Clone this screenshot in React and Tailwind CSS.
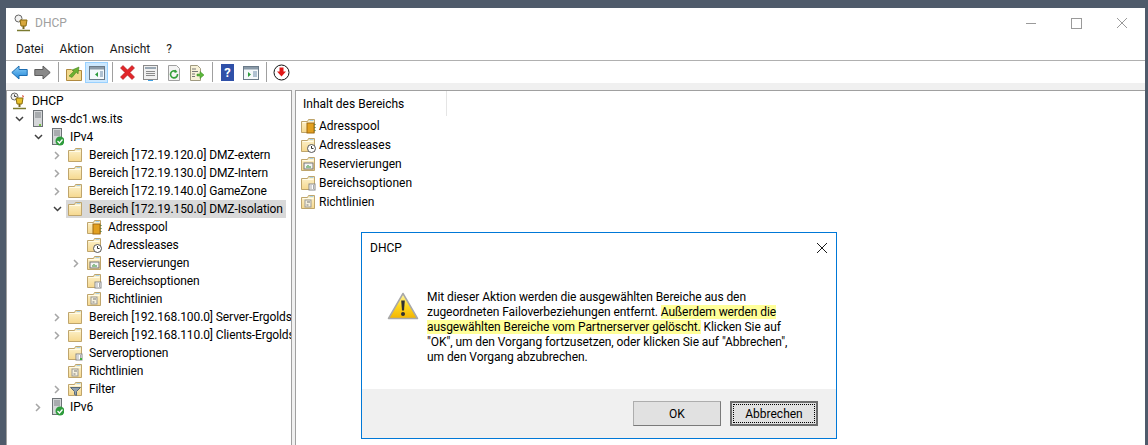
const sans = "font-['Roboto',sans-serif]";

function Folder({ children }) {
  return (
    <svg width="16" height="16" viewBox="0 0 16 16" className="shrink-0">
      <defs>
        <linearGradient id="folderFill" x1="0" y1="0" x2="0" y2="1">
          <stop offset="0" stopColor="#fdf3cf" />
          <stop offset="1" stopColor="#f6d88e" />
        </linearGradient>
      </defs>
      <path d="M1.500 14.500V3.500h6l1-2h6v13z" fill="url(#folderFill)" stroke="#bfa56c" />
      <path d="M9.500 2.500h4" stroke="#a8d0e8" />
      <path d="M2.500 4.500h11" stroke="#fffbe8" />
      {children}
    </svg>
  );
}

function PoolIcon() {
  return (
    <Folder>
      <rect x="7" y="5" width="7" height="10" fill="#e2a020" stroke="#a06a10" />
      <path d="M15 6v1M15 9v1M15 12v1" stroke="#307030" />
    </Folder>
  );
}

function LeaseIcon() {
  return (
    <Folder>
      <circle cx="11.500" cy="11.500" r="4" fill="#fff" stroke="#555" />
      <path d="M11.500 9v2.500h2" stroke="#333" fill="none" />
    </Folder>
  );
}

function ReservIcon() {
  return (
    <Folder>
      <rect x="4" y="7" width="9" height="6" fill="#f4f4f4" stroke="#777" />
      <path d="M6 11h1M8 9v3M10 10v2" stroke="#2e8b2e" />
    </Folder>
  );
}

function OptionIcon({ dot }) {
  return (
    <Folder>
      <rect x="9" y="9" width="6" height="6" fill="#fff" stroke="#888" />
      <path d="M10.500 11h1M13 11h1M10.500 13h1M13 13h1" stroke="#555" />
      {dot && <rect x="13" y="13" width="2" height="2" fill="#40b040" />}
    </Folder>
  );
}

function PolicyIcon() {
  return (
    <Folder>
      <rect x="5" y="6" width="6" height="7" fill="#f6f0dc" stroke="#999" />
      <path d="M7 8h3M6.500 11h2" stroke="#777" />
    </Folder>
  );
}

function FilterIcon() {
  return (
    <Folder>
      <path d="M3.500 6.500h10l-4 4v4l-2-1v-3z" fill="#8fa0b0" stroke="#5a6a78" />
    </Folder>
  );
}

function ServerIcon({ check }) {
  return (
    <svg width="16" height="18" viewBox="-2 0 16 18" className="shrink-0">
      <rect x="2.500" y="0.500" width="9" height="16" fill="#d4d6d8" stroke="#6d7276" />
      <path d="M4 3h6M4 5h6M4 7h6" stroke="#7c8185" />
      {check ? (
        <>
          <circle cx="10" cy="13" r="4.500" fill="#2e9c3c" />
          <path d="M7.500 13l2 2 3-3.500" stroke="#fff" strokeWidth="1.300" fill="none" />
        </>
      ) : (
        <rect x="8" y="14" width="2" height="2" fill="#70c040" />
      )}
    </svg>
  );
}

function DhcpIcon() {
  return (
    <svg width="16" height="18" viewBox="0 0 16 18" className="shrink-0">
      <circle cx="4.500" cy="4.500" r="3.500" fill="#f2f2f2" stroke="#666" />
      <path d="M4.500 2.500v2h2" stroke="#444" fill="none" />
      <path d="M6 6h7l-1 6H7z" fill="#e9c22c" stroke="#8a6d10" />
      <path d="M12 3l2 1-1 2z" fill="#d83a2a" />
      <path d="M9.500 12v3" stroke="#7a6a20" strokeWidth="2" />
      <path d="M3 16.500h13" stroke="#7a7a30" strokeWidth="1.500" />
    </svg>
  );
}

function Chevron({ open }) {
  if (open) {
    return (
      <svg width="9" height="6" viewBox="0 0 9 6">
        <path d="M1 1l3.500 3.500L8 1" fill="none" stroke="#404040" strokeWidth="1.500" />
      </svg>
    );
  }
  return (
    <svg width="6" height="9" viewBox="0 0 6 9">
      <path d="M1 1l3.500 3.500L1 8" fill="none" stroke="#a6a6a6" strokeWidth="1.500" />
    </svg>
  );
}

const rows = [
  { level: 0, icon: <DhcpIcon />, label: "DHCP", noArrow: true },
  { level: 1, icon: <ServerIcon />, label: "ws-dc1.ws.its", open: true },
  { level: 2, icon: <ServerIcon check />, label: "IPv4", open: true },
  { level: 3, icon: <Folder />, label: "Bereich [172.19.120.0] DMZ-extern", closed: true },
  { level: 3, icon: <Folder />, label: "Bereich [172.19.130.0] DMZ-Intern", closed: true },
  { level: 3, icon: <Folder />, label: "Bereich [172.19.140.0] GameZone", closed: true },
  { level: 3, icon: <Folder />, label: "Bereich [172.19.150.0] DMZ-Isolation", open: true, selected: true },
  { level: 4, icon: <PoolIcon />, label: "Adresspool" },
  { level: 4, icon: <LeaseIcon />, label: "Adressleases" },
  { level: 4, icon: <ReservIcon />, label: "Reservierungen", closed: true },
  { level: 4, icon: <OptionIcon />, label: "Bereichsoptionen" },
  { level: 4, icon: <PolicyIcon />, label: "Richtlinien" },
  { level: 3, icon: <Folder />, label: "Bereich [192.168.100.0] Server-Ergoldsbach", closed: true },
  { level: 3, icon: <Folder />, label: "Bereich [192.168.110.0] Clients-Ergoldsbach", closed: true },
  { level: 3, icon: <OptionIcon dot />, label: "Serveroptionen" },
  { level: 3, icon: <PolicyIcon />, label: "Richtlinien" },
  { level: 3, icon: <FilterIcon />, label: "Filter", closed: true },
  { level: 2, icon: <ServerIcon check />, label: "IPv6", closed: true },
];

const levelPads = ["pl-[1px]", "pl-[4px]", "pl-[23px]", "pl-[42px]", "pl-[61px]"];

function TreeRow({ row }) {
  return (
    <div className={`flex h-[18px] items-center whitespace-nowrap ${levelPads[row.level]}`}>
      {!row.noArrow && (
        <span className="flex w-[16px] shrink-0 items-center justify-center">
          {row.open && <Chevron open />}
          {row.closed && <Chevron />}
        </span>
      )}
      <span className={`ml-[1px] flex h-[18px] items-center pl-[1px] pr-[3px] ${row.selected ? "bg-[#d9d9d9]" : ""}`}>
        <span className="flex w-[16px] shrink-0 justify-center">{row.icon}</span>
        <span className="ml-[6px]">{row.label}</span>
      </span>
    </div>
  );
}

function Sep() {
  return (
    <span className="flex w-[8px] shrink-0 justify-center self-center">
      <span className="h-[20px] w-[1px] bg-[#a0a0a0]" />
    </span>
  );
}

function Btn({ active, children }) {
  return (
    <span className={`flex h-[21px] w-[23px] shrink-0 items-center justify-center border ${active ? "border-[#99d1ff] bg-[#cce8ff]" : "border-transparent"}`}>
      {children}
    </span>
  );
}

function Toolbar() {
  return (
    <div className="flex h-[22px] items-end pl-[2px]">
      <Btn>
        <svg width="17" height="15" viewBox="0 0 17 15">
          <defs>
            <linearGradient id="backFill" x1="0" y1="0" x2="0" y2="1">
              <stop offset="0" stopColor="#8fd0f8" />
              <stop offset="1" stopColor="#1f86d8" />
            </linearGradient>
          </defs>
          <path d="M0.800 7.500L8 1v3.500h8.200v6H8V14z" fill="url(#backFill)" stroke="#1c6cb0" />
        </svg>
      </Btn>
      <Btn>
        <svg width="17" height="15" viewBox="0 0 17 15">
          <path d="M16.200 7.500L9 1v3.500H0.800v6H9V14z" fill="#8a8a8a" stroke="#5c5c5c" />
        </svg>
      </Btn>
      <Sep />
      <Btn>
        <svg width="16" height="16" viewBox="0 0 16 16">
          <path d="M0.500 15.500v-11h5l1 1h9v10z" fill="#f2d98c" stroke="#b08a40" />
          <path d="M3 11l5-5-2-1 7-3-1 7-1.500-2L6 12.500z" fill="#6cb030" stroke="#3c7a18" strokeWidth="0.500" />
        </svg>
      </Btn>
      <Btn active>
        <svg width="16" height="14" viewBox="0 0 16 14">
          <rect x="0.500" y="0.500" width="15" height="13" fill="#f4f8fb" stroke="#6a7a88" />
          <rect x="1" y="1" width="14" height="2.500" fill="#8a9aa8" />
          <path d="M9 6l-3 2.500L9 11z" fill="#2e9c3c" />
          <path d="M11 6h3M11 8h3M11 10h3" stroke="#6a8aa8" />
        </svg>
      </Btn>
      <Sep />
      <Btn>
        <svg width="17" height="17" viewBox="0 0 17 17">
          <path d="M1.500 4l2.500-2.500L8.500 6 13 1.500 15.500 4 11 8.500l4.500 4.500-2.500 2.500L8.500 11 4 15.500 1.500 13 6 8.500z" fill="#e2262a" stroke="#a81418" strokeWidth="0.600" />
        </svg>
      </Btn>
      <Btn>
        <svg width="15" height="16" viewBox="0 0 15 16">
          <rect x="0.500" y="0.500" width="14" height="14" fill="#f0f0f0" stroke="#8a8a8a" />
          <rect x="2" y="2" width="11" height="2" fill="#9aa8b4" />
          <path d="M3 6.500h9M3 8.500h9M3 10.500h9" stroke="#8a8a8a" />
          <path d="M5 15.500h5" stroke="#40a0e0" />
        </svg>
      </Btn>
      <Btn>
        <svg width="14" height="16" viewBox="0 0 14 16">
          <path d="M1.500 0.500h8l3 3v12h-11z" fill="#f4f4f4" stroke="#a0a0a0" />
          <path d="M10.500 9a3.500 3.500 0 1 1-1.500-2.500" fill="none" stroke="#35a03c" strokeWidth="1.600" />
          <path d="M8 4.500l2.500 2.500-3 1z" fill="#35a03c" />
        </svg>
      </Btn>
      <Btn>
        <svg width="16" height="16" viewBox="0 0 16 16">
          <path d="M1.500 0.500h7l3 3v12h-10z" fill="#f8f2d8" stroke="#a09a80" />
          <path d="M3 4h4M3 6.500h6M3 9h3M3 11.500h3" stroke="#777" />
          <path d="M8 9h3V6.500l4 3.500-4 3.500V11H8z" fill="#5cb83c" stroke="#3a8a20" strokeWidth="0.500" />
        </svg>
      </Btn>
      <Sep />
      <Btn>
        <span className={`flex h-[17px] w-[13px] items-center justify-center bg-[#2f50a8] text-[13px] font-bold leading-none text-white ${sans}`}>?</span>
      </Btn>
      <Btn>
        <svg width="16" height="14" viewBox="0 0 16 14">
          <rect x="0.500" y="0.500" width="15" height="13" fill="#f4f8fb" stroke="#6a7a88" />
          <rect x="1" y="1" width="14" height="2.500" fill="#8a9aa8" />
          <path d="M5 6l3 2.500L5 11z" fill="#2e9c3c" />
          <path d="M10 6h4M10 8h4M10 10h4" stroke="#6a8aa8" />
        </svg>
      </Btn>
      <Sep />
      <Btn>
        <svg width="17" height="17" viewBox="0 0 17 17">
          <circle cx="8.500" cy="8.500" r="7.500" fill="#fff" stroke="#111" />
          <path d="M6.500 3.500h4v4h2.500l-4.500 5-4.500-5h2.500z" fill="#e01818" />
        </svg>
      </Btn>
    </div>
  );
}

function ContentItem({ icon, label }) {
  return (
    <div className="flex h-[19px] items-center">
      <span className="flex w-[19px] shrink-0">{icon}</span>
      {label}
    </div>
  );
}

function Mark({ children }) {
  return <span className="bg-[#ffff99]">{children}</span>;
}

function Dialog() {
  return (
    <div className="absolute left-[361px] top-[232px] flex h-[207px] w-[476px] flex-col border border-[#0078d7] bg-white">
      <div className="flex h-[29px] items-center justify-between pl-[8px] pr-[9px]">
        <span>DHCP</span>
        <svg width="10" height="10" viewBox="0 0 10 10">
          <path d="M0 0l10 10M10 0L0 10" stroke="#1a1a1a" />
        </svg>
      </div>
      <div className="flex flex-1 pl-[25px] pt-[28px]">
        <svg width="32" height="28" viewBox="0 0 32 28" className="mt-[2px] shrink-0">
          <defs>
            <linearGradient id="warn" x1="0" y1="0" x2="0" y2="1">
              <stop offset="0" stopColor="#fff7b0" />
              <stop offset="0.500" stopColor="#ffd820" />
              <stop offset="1" stopColor="#f2b400" />
            </linearGradient>
          </defs>
          <path d="M16 1.500L30.500 26.500H1.500z" fill="url(#warn)" stroke="#a8a8a8" strokeWidth="1.500" strokeLinejoin="round" />
          <path d="M14.200 8.500h3.600l-0.800 10h-2z" fill="#303030" />
          <circle cx="16" cy="22" r="2" fill="#303030" />
        </svg>
        <p className="ml-[8px] whitespace-nowrap leading-[15px] tracking-[-0.07px]">
          Mit dieser Aktion werden die ausgewählten Bereiche aus den
          <br />
          zugeordneten Failoverbeziehungen entfernt. <Mark>Außerdem werden die</Mark>
          <br />
          <Mark>ausgewählten Bereiche vom Partnerserver gelöscht.</Mark> Klicken Sie auf
          <br />
          "OK", um den Vorgang fortzusetzen, oder klicken Sie auf "Abbrechen",
          <br />
          um den Vorgang abzubrechen.
        </p>
      </div>
      <div className="flex h-[49px] items-center justify-end gap-[9px] bg-[#f0f0f0] pr-[18px]">
        <button className="h-[25px] w-[88px] border border-[#adadad] border-b-[#7a7a7a] border-r-[#7a7a7a] bg-[#e1e1e1]">OK</button>
        <button className="flex h-[25px] w-[88px] items-center justify-center border-2 border-[#6d6d6d] bg-[#e1e1e1]">
          <span className="flex h-[19px] w-[82px] items-center justify-center border border-dotted border-black">Abbrechen</span>
        </button>
      </div>
    </div>
  );
}

export default function App() {
  return (
    <div className={`relative h-[445px] w-[1148px] overflow-hidden bg-[#4f5b6b] pl-[6px] pr-[3px] pt-[8px] text-[12px] text-black ${sans}`}>
      <div className="flex h-[437px] flex-col bg-white">
        <div className="flex h-[30px] items-center pl-[8px] pr-[9px]">
          <svg width="16" height="18" viewBox="0 0 16 18" className="shrink-0">
            <circle cx="4.500" cy="4.500" r="3.500" fill="#f2f2f2" stroke="#666" />
            <path d="M6 6h7l-1 6H7z" fill="#d8a83c" stroke="#8a6d10" />
            <path d="M9.500 12v3" stroke="#7a6a20" strokeWidth="2" />
            <path d="M3 16.500h13" stroke="#7a7a30" strokeWidth="1.500" />
          </svg>
          <span className="ml-[5px] text-[#a0a0a0]">DHCP</span>
          <svg width="12" height="12" viewBox="0 0 12 12" className="ml-auto">
            <path d="M1 6.500h10" stroke="#9a9a9a" />
          </svg>
          <svg width="11" height="11" viewBox="0 0 11 11" className="ml-[34px]">
            <rect x="0.500" y="0.500" width="10" height="10" fill="none" stroke="#9a9a9a" />
          </svg>
          <svg width="12" height="12" viewBox="0 0 12 12" className="ml-[34px] mr-[8px]">
            <path d="M1 1l10 10M11 1L1 11" stroke="#9a9a9a" />
          </svg>
        </div>
        <div className="flex h-[23px] items-center gap-[16px] border-b border-[#b0b0b0] pl-[10px] text-[#1a1a1a]">
          <span>Datei</span>
          <span>Aktion</span>
          <span>Ansicht</span>
          <span>?</span>
        </div>
        <Toolbar />
        <div className="flex min-h-0 flex-1 bg-[#f0f0f0] pt-[7px]">
          <div className="w-[286px] shrink-0 overflow-hidden border-l border-r border-t border-[#a0a0a0] bg-white pt-[1px] tracking-[-0.1px]">
            {rows.map((row, i) => (
              <TreeRow key={i} row={row} />
            ))}
          </div>
          <div className="w-[3px] shrink-0" />
          <div className="flex-1 border-l border-t border-[#a0a0a0] bg-white">
            <div className="flex h-[25px] w-[151px] items-center border-r border-[#e5e5e5] pl-[7px]">Inhalt des Bereichs</div>
            <div className="pl-[4px]">
              <ContentItem icon={<PoolIcon />} label="Adresspool" />
              <ContentItem icon={<LeaseIcon />} label="Adressleases" />
              <ContentItem icon={<ReservIcon />} label="Reservierungen" />
              <ContentItem icon={<OptionIcon />} label="Bereichsoptionen" />
              <ContentItem icon={<PolicyIcon />} label="Richtlinien" />
            </div>
          </div>
        </div>
      </div>
      <Dialog />
    </div>
  );
}
